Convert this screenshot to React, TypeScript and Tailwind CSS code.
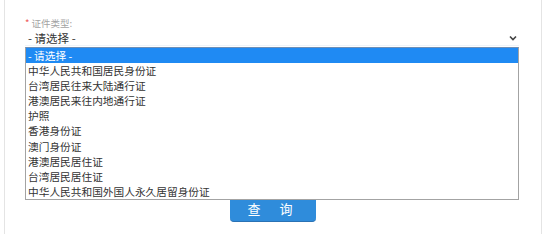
const options = [
  "- 请选择 -",
  "中华人民共和国居民身份证",
  "台湾居民往来大陆通行证",
  "港澳居民来往内地通行证",
  "护照",
  "香港身份证",
  "澳门身份证",
  "港澳居民居住证",
  "台湾居民居住证",
  "中华人民共和国外国人永久居留身份证",
];

export default function App() {
  return (
    <div
      className="h-[234px] w-[551px] overflow-hidden bg-white"
      style={{ fontFamily: '"Noto Sans CJK SC", "Noto Sans", sans-serif' }}
    >
      <div className="ml-[4px] flex h-full w-[538px] flex-col border-x border-[#e4e4e4] pt-[17px]">
        <div className="relative ml-[20px] w-[494px]">
          <div className="h-[13px] text-[9.5px] leading-[13px] text-[#a3a3a3]">
            <span className="text-[#e55]">*</span> 证件类型:
          </div>
          <div className="flex h-[16px] items-center justify-between border-b border-[#eef3f8] pl-[3px] pr-[4px]">
            <span className="text-[11.5px] leading-[14px] text-[#333]">- 请选择 -</span>
            <svg width="8" height="6" viewBox="0 0 8 6" className="mr-[-2px]">
              <path d="M1 1.5 L4 4.5 L7 1.5" fill="none" stroke="#444" strokeWidth="1.6" />
            </svg>
          </div>

          <ul className="absolute left-0 top-[30px] z-10 w-[494px] border border-[#a3a3a3] border-t-[#6f8fb5] bg-white">
            {options.map((o, i) => (
              <li
                key={o}
                className={
                  i === 0
                    ? "h-[15.1px] bg-[#1f8af3] pl-[2px] text-[10.7px] leading-[15.1px] text-white"
                    : "h-[15.1px] pl-[2px] text-[10.7px] leading-[15.1px] text-[#333]"
                }
              >
                {o}
              </li>
            ))}
          </ul>
        </div>

        <div className="mt-[148px] flex justify-center">
          <button
            type="button"
            className="flex h-[28px] w-[86px] items-center justify-center rounded-[4px] border-b border-[#2a72b4] bg-[#2f8cdb] pr-[6px] pt-[2px] text-[13px] leading-[16px] text-white"
          >
            <span>查</span>
            <span className="ml-[19px]">询</span>
          </button>
        </div>
      </div>
    </div>
  );
}
